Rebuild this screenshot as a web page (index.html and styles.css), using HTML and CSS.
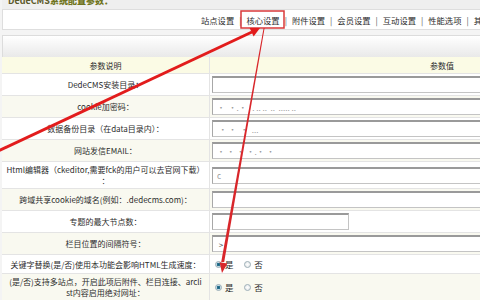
FILE: index.html
```html
<!DOCTYPE html>
<html lang="zh-CN">
<head>
  <meta charset="UTF-8">
  <title>DedeCMS系统配置参数</title>
  <link rel="stylesheet" href="styles.css">
</head>
<body>
  <div class="page">
    <div class="title"><span>DedeCMS<b>系统配置参数：</b></span></div>

    <div class="tabs">
      <span class="tab">站点设置</span><span class="sep">|</span>
      <span class="tab">核心设置</span><span class="sep">|</span>
      <span class="tab">附件设置</span><span class="sep">|</span>
      <span class="tab">会员设置</span><span class="sep">|</span>
      <span class="tab">互动设置</span><span class="sep">|</span>
      <span class="tab">性能选项</span><span class="sep">|</span>
      <span class="tab">其他选项</span>
    </div>

    <div class="bar"></div>

    <table class="cfg">
      <tr class="head">
        <td class="name">参数说明</td>
        <td class="val center">参数值</td>
      </tr>
      <tr>
        <td class="name">DedeCMS安装目录：</td>
        <td class="val"><input type="text" value=""></td>
      </tr>
      <tr class="alt">
        <td class="name">cookie加密码：</td>
        <td class="val"><input type="text" class="blur" value="·  ·.·   . .. ..  ..  ..... .."></td>
      </tr>
      <tr>
        <td class="name">数据备份目录（在data目录内）：</td>
        <td class="val"><input type="text" class="blur" value=" · ·  ·  ..."></td>
      </tr>
      <tr class="alt">
        <td class="name">网站发信EMAIL：</td>
        <td class="val"><input type="text" class="blur" value="· · · ·.· ·"></td>
      </tr>
      <tr class="tall">
        <td class="name">Html编辑器（ckeditor,需要fck的用户可以去官网下载）<br>：</td>
        <td class="val"><input type="text" class="blur" value="c"></td>
      </tr>
      <tr class="alt">
        <td class="name">跨域共享cookie的域名(例如：.dedecms.com)：</td>
        <td class="val"><input type="text" value=""></td>
      </tr>
      <tr>
        <td class="name">专题的最大节点数：</td>
        <td class="val"><input type="text" class="short" value=""></td>
      </tr>
      <tr class="alt">
        <td class="name">栏目位置的间隔符号：</td>
        <td class="val"><input type="text" value=" &gt;"></td>
      </tr>
      <tr class="radio-row">
        <td class="name">关键字替换(是/否)使用本功能会影响HTML生成速度：</td>
        <td class="val">
          <label><input type="radio" name="kw" checked>是</label>
          <label><input type="radio" name="kw">否</label>
        </td>
      </tr>
      <tr class="alt tall">
        <td class="name">(是/否)支持多站点，开启此项后附件、栏目连接、arcli<br>st内容启用绝对网址：</td>
        <td class="val">
          <label><input type="radio" name="ms" checked>是</label>
          <label><input type="radio" name="ms">否</label>
        </td>
      </tr>
      <tr>
        <td class="name">&nbsp;</td>
        <td class="val">&nbsp;</td>
      </tr>
    </table>
  </div>

  <!-- annotation marks drawn over the screenshot -->
  <svg class="marks" width="480" height="300" viewBox="0 0 480 300">
    <rect x="241" y="11" width="43" height="17" fill="none" stroke="#d9383a" stroke-width="1.5"/>
    <line x1="-6" y1="153" x2="252" y2="32" stroke="#e21c1c" stroke-width="3"/>
    <polygon points="260,28 253.6,36.5 249.6,28" fill="#e21c1c"/>
    <polygon points="263.6,28 264.6,28 224.2,262 221.2,262" fill="#d8262a"/>
    <polygon points="222,273 227.4,263.4 219.6,262.2" fill="#d8262a"/>
  </svg>
</body>
</html>
```

FILE: styles.css
```css
body {
  margin: 0;
  background: #f4f4f4;
  font-family: "Noto Sans CJK SC", sans-serif;
  font-size: 8px;
  color: #2c2c2c;
  overflow: hidden;
}
.page {
  width: 680px;
  margin-left: 2px;
}
.title {
  height: 9px;
  overflow: hidden;
  padding-left: 6px;
  background: #efefef;
}
.title span {
  display: block;
  margin-top: -5px;
  line-height: 12px;
  font-size: 9px;
  font-weight: bold;
  color: #5c5a2a;
}
.title b {
  color: #6f7420;
}
.tabs {
  display: flex;
  align-items: center;
  height: 19px;
  padding-left: 198px;
  background: #fff;
  border: 1px solid #dedede;
  font-size: 8.3px;
  white-space: nowrap;
}
.sep {
  padding: 0 5px;
  color: #555;
}
.bar {
  height: 21px;
  margin-top: 5px;
  background: linear-gradient(#fff, #e9e9e9);
  border: 1px solid #dcdcdc;
  border-bottom: none;
}
.cfg {
  width: 672px;
  border-collapse: collapse;
  background: #fff;
}
.cfg td {
  height: 21px;
  padding: 0 2px;
  border-bottom: 1px solid #e4e4e4;
  line-height: 11px;
}
.cfg .name {
  width: 203px;
  text-align: center;
  border-right: 1px solid #e4e4e4;
}
.cfg .center {
  text-align: center;
}
.cfg .head td {
  height: 16px;
  background: #fbfbe5;
}
.cfg .alt td {
  background: #f9f9f0;
}
.cfg .tall td {
  height: 26px;
}
.cfg .radio-row td {
  height: 18px;
}
.cfg input[type="text"] {
  display: block;
  box-sizing: border-box;
  width: 100%;
  height: 17px;
  margin: 0;
  padding: 0 4px;
  border: 1px solid #c4c4c4;
  border-top: 2px solid #9a9a9a;
  border-left-color: #a8a8a8;
  background: #fff;
  font: 8px "Noto Sans CJK SC", sans-serif;
  color: #444;
}
.cfg input.blur {
  color: #9a9a9a;
}
.cfg input.short {
  width: 137px;
}
.cfg label {
  display: inline-flex;
  align-items: center;
  margin-left: 3px;
  margin-right: 6px;
  font-size: 8.5px;
}
.cfg input[type="radio"] {
  appearance: none;
  width: 7px;
  height: 7px;
  margin: 0 3px 0 0;
  border: 1px solid #9fb0b8;
  border-radius: 50%;
  background: radial-gradient(#fff, #dfe4e6);
}
.cfg input[type="radio"]:checked {
  background: radial-gradient(#1c5d78 0, #2a7592 40%, #c4dbe4 55%);
}
.marks {
  position: absolute;
  top: 0;
  left: 0;
  pointer-events: none;
}
```
